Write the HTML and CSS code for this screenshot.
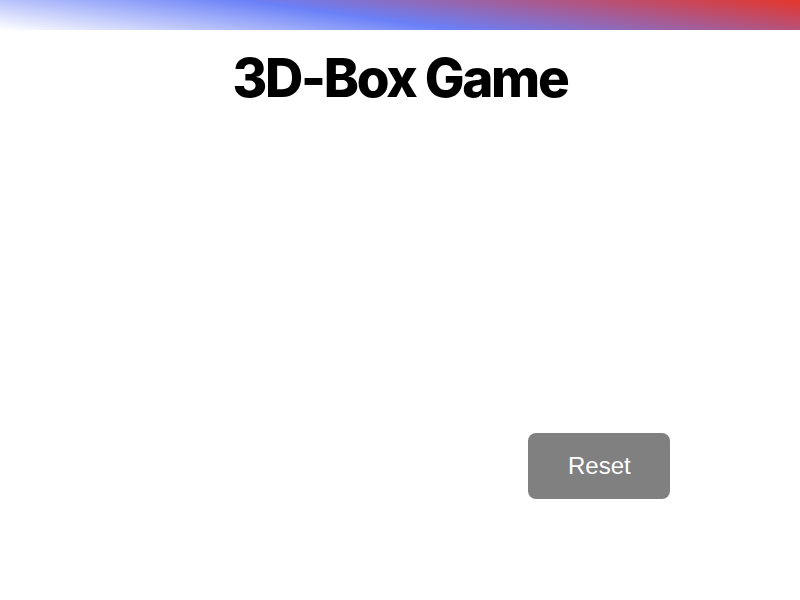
FILE: index.html
```html
<!DOCTYPE html>
<html lang="en">
<head>
<meta charset="utf-8">
<title>3D-Box Game</title>
<link rel="stylesheet" href="styles.css">
</head>
<body>
<div class="topbar"></div>
<h1 class="title">3D-Box Game</h1>
<main class="game">
  <div class="stage"></div>
  <div class="controls">
    <button class="reset-btn" type="button">Reset</button>
  </div>
</main>
</body>
</html>
```
FILE: styles.css
```css
html, body {
  margin: 0;
  padding: 0;
  background: #ffffff;
}
body {
  width: 800px;
  height: 600px;
  overflow: hidden;
}
.topbar {
  height: 30px;
  background: linear-gradient(8deg, #ffffff 0%, #6a80f7 45%, #e6352a 100%);
}
.title {
  margin: 20px 0 0 0;
  text-align: center;
  font-family: "Inter", "Liberation Sans", sans-serif;
  font-weight: 800;
  font-size: 53px;
  line-height: 56px;
  letter-spacing: -2.3px;
  color: #000000;
}
.game {
  display: flex;
  flex-direction: column;
}
.stage {
  height: 327px;
}
.controls {
  display: flex;
  justify-content: flex-end;
  padding-right: 130px;
}
.reset-btn {
  background: #808080;
  color: #ffffff;
  border: none;
  border-radius: 8px;
  padding: 19px 40px;
  font-family: "Liberation Sans", Arial, sans-serif;
  font-size: 24px;
  line-height: 28px;
  width: 142px;
  cursor: pointer;
}
```
